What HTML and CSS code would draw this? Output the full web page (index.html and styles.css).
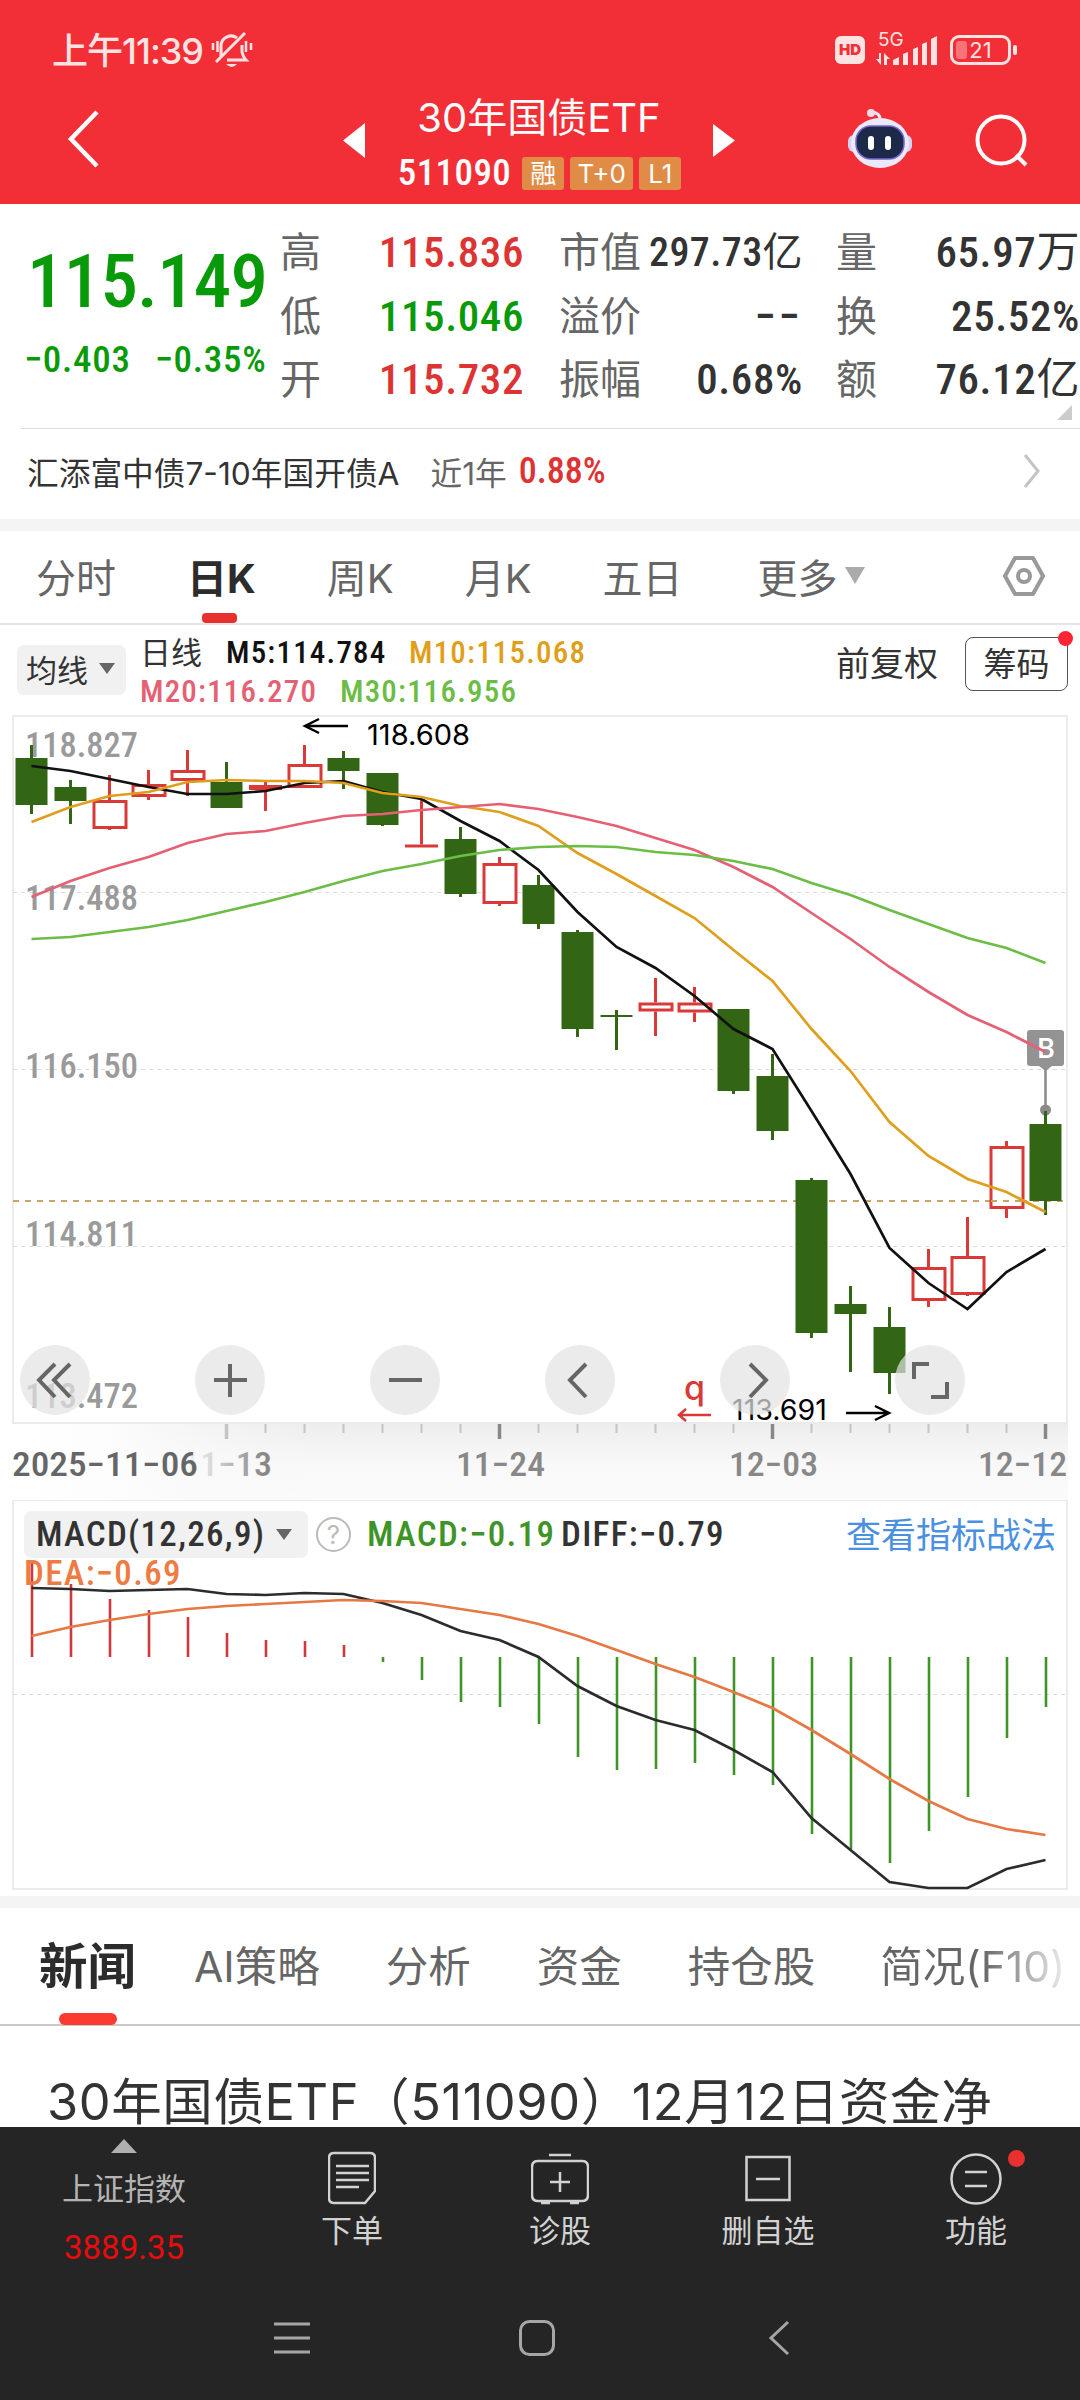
FILE: index.html
```html
<!DOCTYPE html>
<html lang="zh-CN">
<head>
    <meta charset="UTF-8">
    <meta name="viewport" content="width=1080">
    <title>30年国债ETF 511090</title>
    <link rel="stylesheet" href="styles.css">
</head>
<body>
    <!-- Header -->
    <div id="header">
        <div class="status-bar">
            <span class="clock">上午11:39</span>
            <svg class="bell" width="42" height="38" viewBox="0 0 42 38">
                <g fill="none" stroke="#ffe3e3" stroke-width="3">
                    <path d="M10 25V15a10 10 0 0 1 16-8M31 14v7q1 5 4 8H16" />
                    <path d="M5 31L34 2" />
                    <path d="M2 12v7M6.500 10v11M35 10v11M40 12v7" stroke-width="2.500" />
                </g>
                <path d="M15 33h11q-5 6-11 0z" fill="#ffe3e3" />
            </svg>
            <span class="hd">HD</span>
            <div class="signal">
                <span>5G</span>
                <svg width="62" height="29" viewBox="0 0 62 29" fill="#ffe3e3">
                    <path d="M3 17v6H0l5 6V17zM8 29V17l6 6h-3v6z" />
                    <path d="M17 29v-5l6-3v8zM27 29V18l5-2v13zM37 29V13l5-2v18zM46 29V8l5-2v23zM55 29V3l6-3v29z" />
                </svg>
            </div>
            <div class="battery"><i></i><span>21</span></div>
        </div>
        <div class="title-bar">
            <svg class="back" width="36" height="60" viewBox="0 0 36 60"><path d="M32 3L6 30l26 27" fill="none" stroke="#fff" stroke-width="4.500" /></svg>
            <svg class="prev" width="22" height="35" viewBox="0 0 22 35"><path d="M22 0v35L0 17.500z" fill="#fff" /></svg>
            <div class="stock-name">
                <h1>30年国债ETF</h1>
                <div class="code-row">
                    <span class="num code">511090</span>
                    <span class="tag">融</span>
                    <span class="tag wide">T+0</span>
                    <span class="tag">L1</span>
                </div>
            </div>
            <svg class="next" width="22" height="35" viewBox="0 0 22 35"><path d="M0 1v33l22-16.500z" fill="#fff" /></svg>
            <svg class="robot" width="64" height="60" viewBox="0 0 64 60">
                <path d="M32 10q0-6-8-7" fill="none" stroke="#f3e6fa" stroke-width="3" />
                <circle cx="23" cy="4" r="4" fill="#f6dcea" />
                <rect x="0" y="26" width="64" height="17" rx="6" fill="#d5d0f6" />
                <ellipse cx="32" cy="34" rx="29" ry="25" fill="#ebe9fd" />
                <rect x="8" y="17" width="48" height="33" rx="15" fill="#1d2949" stroke="#7463c9" stroke-width="1.500" />
                <rect x="20" y="27" width="6" height="14" rx="3" fill="#fff" />
                <rect x="37" y="27" width="6" height="14" rx="3" fill="#fff" />
            </svg>
            <svg class="search" width="54" height="54" viewBox="0 0 54 54"><g fill="none" stroke="#fff" stroke-width="4"><circle cx="26" cy="26" r="23.500" /><path d="M41 41l10 10" /></g></svg>
        </div>
    </div>

    <!-- Quote -->
    <div id="quote">
        <div class="price-box">
            <div class="num price">115.149</div>
            <div class="change"><span class="num">−0.403</span><span class="num">−0.35%</span></div>
        </div>
        <dl class="col-a">
            <dt>高</dt><dd class="num red">115.836</dd>
            <dt>低</dt><dd class="num green">115.046</dd>
            <dt>开</dt><dd class="num red">115.732</dd>
        </dl>
        <dl class="col-b">
            <dt>市值</dt><dd class="num small">297.73<span class="unit">亿</span></dd>
            <dt>溢价</dt><dd class="num empty">−−</dd>
            <dt>振幅</dt><dd class="num">0.68%</dd>
        </dl>
        <dl class="col-c">
            <dt>量</dt><dd class="num">65.97<span class="unit">万</span></dd>
            <dt>换</dt><dd class="num">25.52%</dd>
            <dt>额</dt><dd class="num">76.12<span class="unit">亿</span></dd>
        </dl>
        <i class="corner"></i>
    </div>

    <div id="fund">
        <span class="fund-name">汇添富中债7-10年国开债A</span>
        <span class="fund-range">近1年</span>
        <span class="num fund-rate">0.88%</span>
        <svg width="18" height="34" viewBox="0 0 18 34"><path d="M2 1l13 16L2 33" fill="none" stroke="#c4c4c4" stroke-width="3" /></svg>
    </div>

    <!-- Period tabs -->
    <div id="periods">
        <span>分时</span>
        <span class="active">日K</span>
        <span>周K</span>
        <span>月K</span>
        <span>五日</span>
        <span class="more">更多</span>
        <svg width="44" height="40" viewBox="0 0 44 40"><g fill="none" stroke="#999" stroke-width="4"><path d="M13 2h18l10 18-10 18H13L3 20z" stroke-linejoin="round" /><circle cx="22" cy="20" r="6" /></g></svg>
    </div>

    <!-- Moving average legend -->
    <div id="ma-bar">
        <div class="picker">均线</div>
        <div class="ma-values">
            <div><span class="day">日线</span><span class="num m5">M5:114.784</span><span class="num m10">M10:115.068</span></div>
            <div><span class="num m20">M20:116.270</span><span class="num m30">M30:116.956</span></div>
        </div>
        <span class="adjust">前复权</span>
        <div class="chips">筹码</div>
    </div>

    <!-- Candles -->
    <div id="kline">
        <svg id="kline-svg" width="1080" height="709" viewBox="0 0 1080 709"></svg>
        <div class="tools">
            <button><svg viewBox="0 0 70 70"><path d="M35 19L19 35l16 17M50 19L34 35l16 17" /></svg></button>
            <button><svg viewBox="0 0 70 70"><path d="M35 19v33M19 35h33" /></svg></button>
            <button><svg viewBox="0 0 70 70"><path d="M19 35h33" /></svg></button>
            <button><svg viewBox="0 0 70 70"><path d="M41 19L25 35l16 17" /></svg></button>
            <button><svg viewBox="0 0 70 70"><path d="M30 19l16 16-16 17" /></svg></button>
            <button><svg viewBox="0 0 70 70"><path d="M19 34V19h15M36 52h16V37" /></svg></button>
        </div>
    </div>
    <svg id="axis" width="1080" height="77" viewBox="0 0 1080 77"></svg>

    <!-- MACD -->
    <div id="macd">
        <svg id="macd-svg" width="1080" height="390" viewBox="0 0 1080 390"></svg>
        <div class="macd-bar">
            <div class="picker num">MACD(12,26,9)</div>
            <span class="help">?</span>
            <span class="num macd-value">MACD:−0.19</span>
            <span class="num diff-value">DIFF:−0.79</span>
            <a>查看指标战法</a>
        </div>
        <div class="num dea-value">DEA:−0.69</div>
    </div>

    <!-- News -->
    <div id="news-tabs">
        <span class="active">新闻</span>
        <span>AI策略</span>
        <span>分析</span>
        <span>资金</span>
        <span>持仓股</span>
        <span class="fade">简况(F10)</span>
    </div>
    <div id="news">30年国债ETF（511090）12月12日资金净</div>

    <!-- Bottom bar -->
    <div id="bottom">
        <div class="index-cell">
            <i></i>
            <span>上证指数</span>
            <b>3889.35</b>
        </div>
        <div class="cell">
            <svg width="48" height="54" viewBox="0 0 48 54"><path d="M6 2h36q5 0 5 5v33L37 52H6q-5 0-5-5V7q0-5 5-5zM8 15h33M8 22h33M8 29h33M8 36h23" /></svg>
            <span>下单</span>
        </div>
        <div class="cell">
            <svg width="58" height="54" viewBox="0 0 58 54"><path d="M18 4h22M7 10h44q6 0 6 6v28q0 6-6 6H7q-6 0-6-6V16q0-6 6-6zM29 21v20M19 31h20M10 52h9M39 52h9" /></svg>
            <span>诊股</span>
        </div>
        <div class="cell">
            <svg width="46" height="54" viewBox="0 0 46 54"><path d="M1.500 6h43v43h-43zM11 28h24" /></svg>
            <span>删自选</span>
        </div>
        <div class="cell">
            <svg width="52" height="54" viewBox="0 0 52 54"><circle cx="26" cy="28" r="24.500" /><path d="M15 21h22M15 35h22" /></svg>
            <span>功能</span>
            <em></em>
        </div>
    </div>
    <div id="nav">
        <svg width="36" height="36" viewBox="0 0 36 36"><path d="M0 4h36M0 18h36M0 32h36" /></svg>
        <svg width="36" height="36" viewBox="0 0 36 36"><rect x="1.500" y="1.500" width="33" height="33" rx="9" /></svg>
        <svg width="36" height="36" viewBox="0 0 36 36"><path d="M24 2L7 18l17 16" /></svg>
    </div>

    <script>
        const stepX = 39;
        const startX = 31.5;
        const px = i => startX + stepX * i;

        // [up?, high, top, bottom, low]
        const candles = [
            [0, 30, 43, 90, 99], [0, 65, 72, 86, 109], [1, 60, 85, 114, 115], [1, 55, 69, 82, 85],
            [1, 35, 55, 66, 81], [0, 47, 67, 93, 93], [1, 67, 70, 75, 96], [1, 30, 49, 73, 73],
            [0, 36, 43, 56, 74], [0, 58, 58, 110, 111], [1, 85, 129.5, 132.5, 132.5], [0, 112, 124, 179, 182],
            [1, 142, 148, 189, 191], [0, 160, 170, 209, 214], [0, 215, 217, 314, 322], [0, 295, 300, 302, 335],
            [1, 263, 287.5, 296.5, 321], [1, 272, 287.5, 297.5, 307], [0, 294, 294, 376, 379], [0, 339, 361, 416, 425],
            [0, 463, 465, 618, 623], [0, 571, 589, 599, 657], [0, 592, 612, 658, 679], [1, 534, 552, 586, 592],
            [1, 502, 541, 580, 581], [1, 426, 431, 494, 503], [0, 396, 409, 486, 500]
        ];
        const ma = {
            '#111': [51, 56, 64, 72, 79, 79, 76, 68, 66, 77, 84, 106, 126, 155, 197, 232, 253, 281, 314, 334, 396, 459, 533, 568, 594, 557, 534],
            '#df9f1c': [107, 92, 81, 77, 67, 65, 66, 66, 68, 78, 82, 91, 97, 111, 138, 159, 181, 203, 235, 266, 314, 356, 407, 441, 464, 477, 497],
            '#e66074': [182, 166, 153, 142, 128, 119, 116, 108, 101, 99, 95, 92, 89, 94, 102, 111, 123, 135, 152, 172, 198, 224, 252, 277, 300, 317, 337],
            '#6cbd45': [224, 222, 217, 212, 205, 196, 187, 177, 166, 156, 149, 141, 135, 132, 131, 132, 137, 140, 146, 154, 168, 180, 195, 209, 223, 233, 248]
        };
        const bars = [63, 84, 99, 110, 117, 133, 140, 141, 145, 162, 180, 202, 207, 224, 257, 270, 269, 263, 275, 285, 334, 349, 363, 331, 297, 238, 207];
        const diff = [88, 89, 91, 90, 89, 94, 95, 93, 94, 103, 115, 131, 140, 157, 186, 206, 220, 230, 250, 272, 318, 350, 382, 388, 388, 369, 360];
        const dea = [136, 127, 120, 114, 109, 106, 104, 102, 100, 101, 103, 109, 115, 124, 136, 150, 164, 177, 192, 208, 230, 254, 279, 301, 319, 329, 335];

        function line(x1, y1, x2, y2, color, width, dash) {
            return `<line x1="${x1}" y1="${y1}" x2="${x2}" y2="${y2}" stroke="${color}" stroke-width="${width}" ${dash ? `stroke-dasharray="${dash}"` : ''}/>`;
        }

        function curve(values, color) {
            const points = values.map((v, i) => px(i) + ',' + v).join(' ');
            return `<polyline points="${points}" fill="none" stroke="${color}" stroke-width="2.7"/>`;
        }

        function label(x, y, width, text, cls) {
            return `<text x="${x}" y="${y}" textLength="${width}" lengthAdjust="spacingAndGlyphs" class="${cls}">${text}</text>`;
        }

        function drawKline() {
            let out = '<rect x="13" y="1" width="1054" height="707" fill="#fff" stroke="#ebebeb" stroke-width="2"/>';
            [177.5, 354.5, 531.5].forEach(y => out += line(13, y, 1066, y, '#dcdcdc', 1, '4 4'));
            out += line(13, 486, 1066, 486, '#c8a36a', 2, '6 6');
            const prices = [['118.827', 42], ['117.488', 195], ['116.150', 363], ['114.811', 531], ['113.472', 693]];
            prices.forEach(p => out += label(25, p[1], 113, p[0], 'axis-price'));

            // buy marker
            out += '<path d="M1030 315h31q3 0 3 3v30q0 3-3 3h-9l-6.500 5-6.500-5h-9q-3 0-3-3v-30q0-3 3-3z" fill="#939393"/>';
            out += line(1045.5, 354, 1045.5, 394, '#8a8a8a', 2.5) + '<circle cx="1045.500" cy="395" r="5.500" fill="#8a8a8a"/>';
            out += '<text x="1046" y="343" text-anchor="middle" class="mark">B</text>';

            candles.forEach(([up, high, top, bottom, low], i) => {
                const x = px(i);
                if (up) {
                    out += line(x, high, x, top, '#d93a38', 3) + line(x, bottom, x, low, '#d93a38', 3);
                    const h = bottom - top;
                    out += h < 6
                        ? `<rect x="${x - 16.5}" y="${top}" width="33" height="${h}" fill="#d93a38"/>`
                        : `<rect x="${x - 15.5}" y="${top + 1.5}" width="32" height="${h - 3}" fill="#fff" stroke="#d93a38" stroke-width="3"/>`;
                } else {
                    out += line(x, high, x, low, '#326614', 3);
                    out += `<rect x="${x - 16}" y="${top}" width="32" height="${bottom - top}" fill="#326614"/>`;
                }
            });
            // the price line shows through hollow candles
            out += line(991, 486, 1022, 486, '#c8a36a', 2, '6 6');
            for (const color in ma) out += curve(ma[color], color);

            out += '<path d="M348 11H306M319 4l-14 7 14 7" fill="none" stroke="#000" stroke-width="2.500"/>';
            out += label(367, 30, 103, '118.608', 'peak');
            out += '<path d="M846 698h42M875 691l14 7-14 7" fill="none" stroke="#000" stroke-width="2.500"/>';
            out += label(732, 705, 95, '113.691', 'peak');
            out += '<text x="684" y="685" class="quit">q</text>';
            out += '<path d="M711 700h-31M686 694l-7 6 7 6" fill="none" stroke="#d93a38" stroke-width="2.500"/>';
            document.getElementById('kline-svg').innerHTML = out;
        }

        function drawAxis() {
            let out = `<defs>
                <linearGradient id="bg" x2="0" y2="1"><stop offset="0" stop-color="#ededed"/><stop offset=".5" stop-color="#f8f8f8"/><stop offset="1" stop-color="#fbfbfb"/></linearGradient>
                <linearGradient id="veil"><stop offset="0" stop-color="#fff"/><stop offset=".3" stop-color="#fdfdfd"/><stop offset="1" stop-color="#f7f7f7" stop-opacity="0"/></linearGradient>
                <linearGradient id="dim"><stop offset="0" stop-color="#888" stop-opacity="0"/><stop offset=".25" stop-color="#888" stop-opacity=".2"/><stop offset=".9" stop-color="#888"/></linearGradient>
            </defs>
            <rect x="12" width="1056" height="77" fill="url(#bg)"/>
            <rect x="12" width="300" height="77" fill="url(#veil)"/>`;
            for (let i = 5; i < 27; i++) {
                const major = i === 12 || i === 19 || i === 26;
                out += line(px(i), 1, px(i), major || i === 5 ? 16 : 10, major ? '#888' : '#c4c4c4', i === 5 || major ? 3.5 : 2);
            }
            out += label(182, 53, 90, '11−13', 'date dim');
            out += label(12, 53, 186, '2025−11−06', 'date dark');
            out += label(456, 53, 89, '11−24', 'date') + label(729, 53, 89, '12−03', 'date') + label(978, 53, 89, '12−12', 'date');
            document.getElementById('axis').innerHTML = out;
        }

        function drawMacd() {
            let out = '<rect x="13" y="0" width="1054" height="389" fill="#fff" stroke="#ebebeb" stroke-width="2"/>';
            out += line(13, 194.5, 1066, 194.5, '#dcdcdc', 1, '4 4');
            bars.forEach((y, i) => out += line(px(i) + .5, 157, px(i) + .5, y, y < 157 ? '#cc3a3c' : '#3f9428', 2.6));
            out += curve(diff, '#2c2c2c') + curve(dea, '#e67843');
            document.getElementById('macd-svg').innerHTML = out;
        }

        drawKline();
        drawAxis();
        drawMacd();
    </script>
</body>
</html>
```
FILE: styles.css
```css
* {
    box-sizing: border-box;
}

body {
    margin: 0;
    width: 1080px;
    height: 2400px;
    overflow: hidden;
    background-color: #fff;
    color: #333;
    font-family: Inter, "Noto Sans CJK SC", sans-serif;
    display: flex;
    flex-direction: column;
    white-space: nowrap;
}

svg {
    display: block;
    flex: none;
}

.num {
    font-family: Roboto, "Noto Sans CJK SC", sans-serif;
    font-weight: 500;
    font-stretch: 85%;
}

.unit {
    font-weight: 400;
}

.red {
    color: #dd3333;
}

.green {
    color: #099a09;
}

/* header */
#header {
    height: 204px;
    flex: none;
    background-color: #f22f37;
    color: #fff;
}

.status-bar {
    height: 100px;
    padding-left: 52px;
    display: flex;
    align-items: center;
    color: #ffe3e3;
}

.clock {
    width: 159px;
    margin-top: -5px;
    font-size: 36px;
    font-weight: 500;
    letter-spacing: -1px;
}

.hd {
    width: 30px;
    height: 28px;
    margin-left: 582px;
    border-radius: 6px;
    background-color: #ffe3e3;
    color: #f22f37;
    font-size: 15px;
    font-weight: 900;
    line-height: 28px;
    text-align: center;
}

.signal {
    position: relative;
    margin-left: 11px;
    padding-top: 1px;
}

.signal span {
    position: absolute;
    left: 2px;
    top: -5px;
    font-size: 19px;
    line-height: 20px;
}

.battery {
    position: relative;
    width: 61px;
    height: 30px;
    margin-left: 12px;
    border: 3px solid #ffe3e3;
    border-radius: 9px;
    font-size: 22px;
    line-height: 24px;
    text-align: center;
}

.battery i {
    position: absolute;
    left: 3px;
    top: 3px;
    width: 11px;
    height: 18px;
    border-radius: 3px;
    background-color: #fa7379;
}

.battery::after {
    content: "";
    position: absolute;
    right: -9px;
    top: 7px;
    width: 4px;
    height: 10px;
    border-radius: 2px;
    background-color: #ffe3e3;
}

.title-bar {
    height: 104px;
    display: flex;
    align-items: flex-start;
}

.back {
    margin: 9px 0 0 65px;
}

.prev {
    margin: 23px 0 0 242px;
}

.stock-name {
    width: 348px;
    display: flex;
    flex-direction: column;
    align-items: center;
}

h1 {
    margin: -8px 0 0;
    font-size: 40px;
    font-weight: 400;
    line-height: 52px;
}

.code-row {
    display: flex;
    align-items: center;
    gap: 6px;
    margin: 11px 0 0 1px;
    line-height: 36px;
}

.code {
    margin-right: 5px;
    font-size: 37px;
    letter-spacing: 0.4px;
}

.tag {
    width: 42px;
    height: 33px;
    border-radius: 3px;
    background-color: #e08c47;
    font-size: 26px;
    line-height: 33px;
    text-align: center;
}

.tag.wide {
    width: 63px;
}

.next {
    margin-top: 23px;
}

.robot {
    margin: 9px 0 0 113px;
}

.search {
    margin: 14px 0 0 63px;
}

/* quote */
#quote {
    position: relative;
    height: 225px;
    flex: none;
    display: flex;
}

#quote::after {
    content: "";
    position: absolute;
    left: 21px;
    right: 0;
    bottom: 0;
    height: 1px;
    background-color: #dedede;
}

.price-box {
    width: 280px;
    padding-left: 24px;
    color: #099a09;
}

.price {
    margin-top: 33px;
    padding-left: 3px;
    font-size: 75px;
    line-height: 88px;
    letter-spacing: -0.8px;
}

.change {
    display: flex;
    gap: 24px;
    margin-top: 13px;
    font-size: 37px;
    line-height: 44px;
    letter-spacing: 0.7px;
}

dl {
    margin: 17px 0 0;
    display: grid;
    grid-auto-rows: 63.5px;
    line-height: 63px;
    align-content: start;
}

dt {
    color: #666;
    font-size: 41px;
}

dd {
    margin: 0;
    font-size: 43px;
    text-align: right;
    letter-spacing: 0.6px;
}

dd.small {
    font-size: 40px;
    letter-spacing: 0.4px;
}

dd.empty {
    letter-spacing: 3px;
}

.col-a {
    width: 244px;
    grid-template-columns: 60px 1fr;
}

.col-b {
    width: 244px;
    margin-left: 35px;
    grid-template-columns: 86px 1fr;
}

.col-c {
    width: 244px;
    margin-left: 33px;
    grid-template-columns: 60px 1fr;
}

.corner {
    position: absolute;
    left: 1057px;
    top: 201px;
    border-left: 15px solid transparent;
    border-bottom: 15px solid #ccc;
}

#fund {
    height: 90px;
    flex: none;
    padding: 0 39px 7px 27px;
    display: flex;
    align-items: center;
    font-size: 31.7px;
}

.fund-range {
    margin-left: 31px;
    color: #666;
}

.fund-rate {
    margin-left: 12px;
    color: #dd3333;
    font-size: 36px;
}

#fund svg {
    margin-left: auto;
}

/* period tabs */
#periods {
    position: relative;
    height: 106px;
    flex: none;
    padding: 0 0 3px 36px;
    display: flex;
    align-items: center;
    border-top: 12px solid #f4f4f4;
    border-bottom: 2px solid #e6e6e6;
    color: #666;
    font-size: 40px;
}

#periods span {
    position: relative;
    margin-right: 71px;
}

#periods .active {
    color: #2c2c2c;
    font-weight: 700;
}

#periods .active::after {
    content: "";
    position: absolute;
    left: 15px;
    bottom: -18px;
    width: 35px;
    height: 10px;
    border-radius: 4px;
    background-color: #e8302f;
}

#periods .more {
    margin-left: 4px;
}

#periods .more::after {
    content: "";
    position: absolute;
    left: 87px;
    top: 20px;
    border: 10px solid transparent;
    border-top: 17px solid #aaa;
    border-bottom: 0;
}

#periods svg {
    margin: 0 34px 0 auto;
}

/* moving averages */
#ma-bar {
    height: 90px;
    flex: none;
    padding-left: 17px;
    display: flex;
}

.picker {
    height: 50px;
    border-radius: 7px;
    background-color: #f1f1f1;
    display: flex;
    align-items: center;
}

.picker::after {
    content: "";
    margin-left: 11px;
    border: 8px solid transparent;
    border-top: 11px solid #666;
    border-bottom: 0;
}

#ma-bar .picker {
    width: 109px;
    margin-top: 20px;
    padding: 0 0 3px 9px;
    font-size: 31px;
}

.ma-values {
    width: 710px;
    padding: 8px 0 0 14px;
    font-size: 31px;
    line-height: 39px;
}

.ma-values .num {
    letter-spacing: 1.2px;
}

.ma-values div {
    display: flex;
    height: 39px;
}

.day {
    width: 86px;
}

.m5 {
    width: 183px;
    color: #111;
}

.m10 {
    color: #df9f1c;
}

.m20 {
    width: 200px;
    color: #e66074;
}

.m30 {
    color: #6cbd45;
}

.adjust {
    width: 129px;
    margin-top: 14px;
    font-size: 34px;
    line-height: 50px;
}

.chips {
    position: relative;
    width: 103px;
    height: 54px;
    margin-top: 12px;
    border: 1px solid #555;
    border-radius: 8px;
    font-size: 33px;
    line-height: 52px;
    text-align: center;
}

.chips::after {
    content: "";
    position: absolute;
    right: -6px;
    top: -7px;
    width: 15px;
    height: 15px;
    border-radius: 50%;
    background-color: #fd2434;
}

/* charts */
#kline {
    position: relative;
    height: 708px;
    flex: none;
}

.tools {
    position: absolute;
    left: 20px;
    top: 630px;
    display: flex;
    gap: 105px;
}

.tools button {
    width: 70px;
    height: 70px;
    padding: 0;
    border: none;
    border-radius: 50%;
    background-color: rgba(227, 227, 227, 0.71);
}

.tools path {
    fill: none;
    stroke: #666;
    stroke-width: 4;
}

svg text {
    font-family: Roboto, sans-serif;
    font-weight: 500;
}

.axis-price {
    fill: #9a9a9a;
    font-size: 35px;
    font-stretch: 85%;
}

svg .peak {
    font-family: Inter, sans-serif;
    font-weight: 400;
    font-size: 28px;
}

.mark {
    fill: #fff;
    font-size: 28px;
}

svg .quit {
    fill: #d93a38;
    font-family: Inter, sans-serif;
    font-size: 34px;
}

.date {
    fill: #888;
    font-size: 34px;
    font-stretch: 85%;
}

.date.dark {
    fill: #666;
}

.date.dim {
    fill: url(#dim);
}

#macd {
    position: relative;
    height: 408px;
    flex: none;
    border-bottom: 12px solid #f4f4f4;
}

#macd-svg {
    position: absolute;
    left: 0;
    top: 0;
}

.macd-bar {
    position: relative;
    height: 58px;
    padding: 11px 24px 0 24px;
    display: flex;
    align-items: center;
    font-size: 35px;
}

.macd-bar .num,
.dea-value {
    letter-spacing: 1.3px;
}

.macd-bar .picker {
    width: 284px;
    height: 47px;
    padding-left: 12px;
    color: #333;
    letter-spacing: 1.3px;
}

.help {
    width: 35px;
    height: 35px;
    margin-left: 8px;
    border: 2px solid #bbb;
    border-radius: 50%;
    color: #bbb;
    font-size: 26px;
    line-height: 31px;
    text-align: center;
}

.macd-value {
    width: 194px;
    margin-left: 16px;
    color: #3f9428;
}

.macd-bar a {
    margin: -4px 0 0 auto;
    color: #4a90e2;
}

.dea-value {
    position: relative;
    margin-left: 24px;
    color: #ef7a42;
    font-size: 35px;
    line-height: 32px;
}

/* news */
#news-tabs {
    position: relative;
    height: 118px;
    flex: none;
    padding: 0 0 6px 39px;
    display: flex;
    align-items: center;
    border-bottom: 2px solid #c8c8c8;
    color: #666;
    font-size: 42.5px;
}

#news-tabs span {
    margin-right: 66px;
}

#news-tabs .active {
    margin-right: 58px;
    color: #2c2c2c;
    font-size: 48.5px;
    font-weight: 700;
}

#news-tabs::after {
    content: "";
    position: absolute;
    left: 59px;
    bottom: -1px;
    width: 58px;
    height: 12px;
    border-radius: 6px;
    background-color: #fb3b30;
}

#news-tabs .fade {
    margin: 0 0 0 -1px;
    background: linear-gradient(90deg, #666 55%, #eee 100%);
    -webkit-background-clip: text;
    background-clip: text;
    color: transparent;
}

#news {
    height: 101px;
    flex: none;
    padding: 38px 0 0 47px;
    font-size: 50.5px;
    line-height: 76px;
    letter-spacing: 0.6px;
    overflow: hidden;
}

/* bottom bar */
#bottom {
    height: 153px;
    flex: none;
    background-color: #252525;
    color: #d2d2d2;
    font-size: 31px;
    display: grid;
    grid-template-columns: 248px repeat(4, 208px);
}

.index-cell {
    display: flex;
    flex-direction: column;
    align-items: center;
    color: #b4b4b4;
}

.index-cell i {
    margin-top: 12px;
    border: 13px solid transparent;
    border-bottom: 14px solid #b0b0b0;
    border-top: 0;
}

.index-cell span {
    margin-top: 13px;
    line-height: 46px;
}

.index-cell b {
    margin-top: 16px;
    color: #e80c0c;
    font-family: Roboto, sans-serif;
    font-size: 33px;
    font-weight: 400;
    line-height: 40px;
}

.cell {
    position: relative;
    display: flex;
    flex-direction: column;
    align-items: center;
}

.cell svg {
    margin-top: 24px;
    fill: none;
    stroke: #d2d2d2;
    stroke-width: 2.5;
}

.cell span {
    margin-top: 5px;
    line-height: 42px;
}

.cell em {
    position: absolute;
    left: 136px;
    top: 23px;
    width: 17px;
    height: 17px;
    border-radius: 50%;
    background-color: #e8302f;
}

#nav {
    height: 120px;
    flex: none;
    padding: 40px 0 0 274px;
    display: flex;
    gap: 209px;
    background-color: #252525;
}

#nav svg {
    fill: none;
    stroke: #a6a6a6;
    stroke-width: 3;
}
```
